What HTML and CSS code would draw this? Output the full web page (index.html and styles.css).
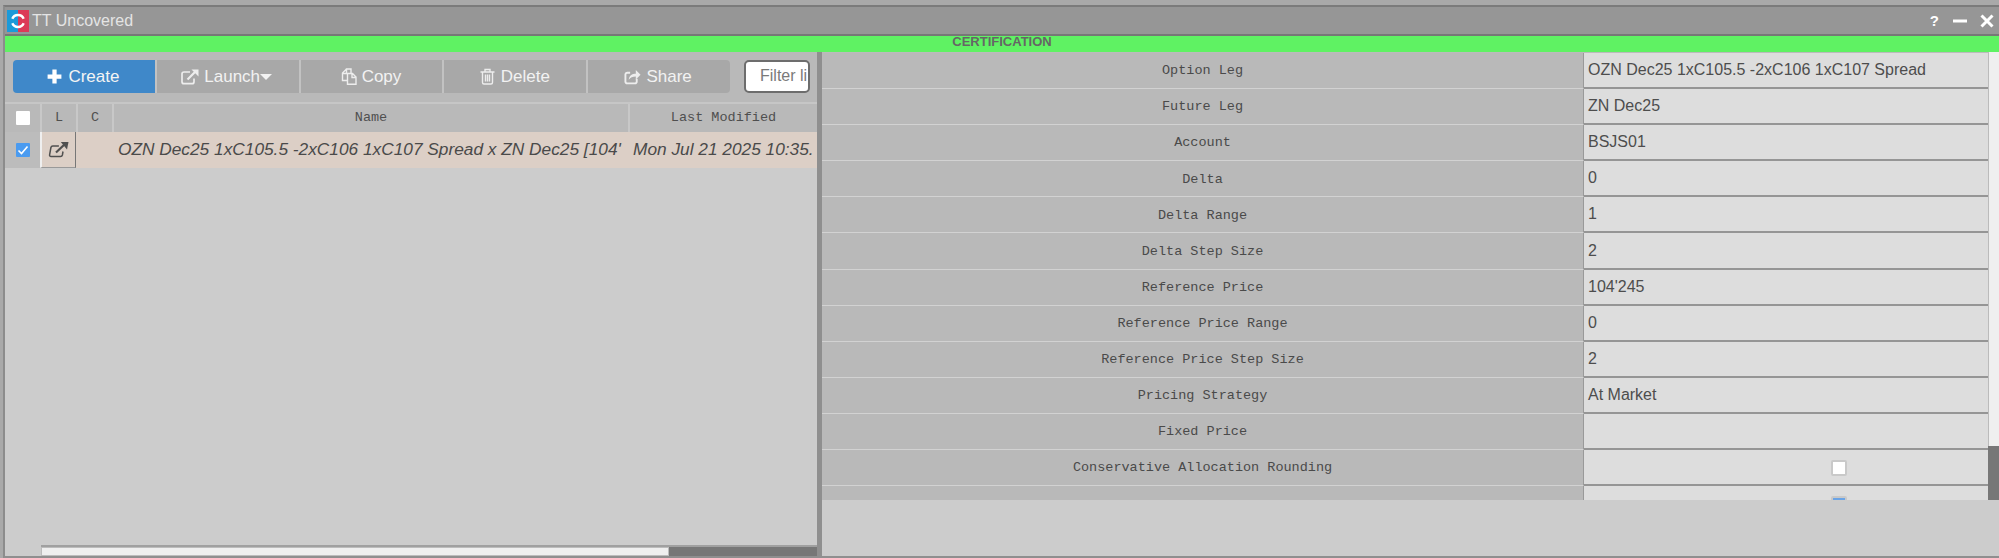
FILE: index.html
```html
<!DOCTYPE html>
<html lang="en">
<head>
<meta charset="utf-8">
<title>TT Uncovered</title>
<link rel="stylesheet" href="styles.css">
</head>
<body>
<div class="window">
  <header class="titlebar">
    <svg class="logo" viewBox="0 0 22 22"><rect width="11" height="22" fill="#1b9ad9"/><rect x="11" width="11" height="22" fill="#dc3a57"/><path d="M5.300 8.800a6.200 6.200 0 0 1 11.400 0M16.700 13.200a6.200 6.200 0 0 1-11.400 0" fill="none" stroke="#fff" stroke-width="2.400"/></svg>
    <span class="title">TT Uncovered</span>
    <span class="win-actions">
      <span class="help">?</span>
      <svg class="win-icon" viewBox="0 0 14 14"><path d="M0 7h14" stroke="#fff" stroke-width="3"/></svg>
      <svg class="win-icon" viewBox="0 0 14 14"><path d="M1.500 1.500l11 11M12.500 1.500l-11 11" stroke="#fff" stroke-width="3"/></svg>
    </span>
  </header>
  <div class="envbar">CERTIFICATION</div>
  <div class="panes">
    <section class="left">
      <div class="toolbar">
        <div class="btn-group">
          <button class="btn primary"><svg class="ico" viewBox="0 0 16 16"><path d="M8 1.500v13M1.500 8h13" stroke="#fff" stroke-width="4"/></svg>Create</button>
          <button class="btn"><svg class="ico ico-wide" viewBox="0 0 18 16"><path d="M13 9.500v3.200a2 2 0 0 1-2 2H3a2 2 0 0 1-2-2V5a2 2 0 0 1 2-2h6" fill="none" stroke="#ededed" stroke-width="1.700"/><path d="M6.500 10.500L15 2" fill="none" stroke="#ededed" stroke-width="2.200"/><path d="M10.500 0.500H17.500V7.500z" fill="#ededed"/></svg>Launch<span class="caret"></span></button>
          <button class="btn"><svg class="ico" viewBox="0 0 17 17"><path d="M6.500 4.500V1h4.500v4M6.500 1L2.500 5v7.500h5M2.500 5.500h4V1.500" fill="none" stroke="#ededed" stroke-width="1.400"/><path d="M7.500 5.500h5l3.500 3.500v7.300H7.500zM12 5.500v4h4" fill="none" stroke="#ededed" stroke-width="1.400"/></svg>Copy</button>
          <button class="btn"><svg class="ico" viewBox="0 0 17 17"><path d="M1.500 4h14M6 4V1.500h5V4M3.500 4v10.500a1.500 1.500 0 0 0 1.500 1.500h7a1.500 1.500 0 0 0 1.500-1.500V4M6.500 6.500v7M8.500 6.500v7M10.500 6.500v7" fill="none" stroke="#ededed" stroke-width="1.400"/></svg>Delete</button>
          <button class="btn"><svg class="ico" viewBox="0 0 18 17"><path d="M13.500 11v2.800a2 2 0 0 1-2 2H3.500a2 2 0 0 1-2-2V6.500a2 2 0 0 1 2-2h3" fill="none" stroke="#ededed" stroke-width="2"/><path d="M5 12c.3-4.500 3.500-6.500 7.500-6.500V1.500l5 5.200-5 5V8.500c-3.500 0-5.500 1-7.500 3.500z" fill="#ededed"/></svg>Share</button>
        </div>
        <div class="filter">Filter li</div>
      </div>
      <div class="grid-head">
        <div class="hcell"><span class="check"></span></div>
        <div class="hcell">L</div>
        <div class="hcell">C</div>
        <div class="hcell">Name</div>
        <div class="hcell">Last Modified</div>
      </div>
      <div class="grid-row">
        <div class="sel-cell"><span class="check on"><svg viewBox="0 0 14 14"><path d="M2.500 7.500l3 3 6-7" fill="none" stroke="#fff" stroke-width="1.600"/></svg></span></div>
        <div class="launch-cell"><svg class="launch" viewBox="0 0 21 17"><path d="M15 10.500l-.6 3.500a2 2 0 0 1-2 1.500H3a1.400 1.400 0 0 1-1.400-1.700l1.300-7.300a2 2 0 0 1 2-1.500h6" fill="none" stroke="#505050" stroke-width="1.500"/><path d="M8 11.500L17 3" fill="none" stroke="#505050" stroke-width="2.200"/><path d="M12.800 1H20.500L19 8.500z" fill="#505050"/></svg></div>
        <div class="c-cell"></div>
        <div class="name-cell">OZN Dec25 1xC105.5 -2xC106 1xC107 Spread x ZN Dec25 [104'</div>
        <div class="date-cell">Mon Jul 21 2025 10:35.</div>
      </div>
      <div class="hscroll"><div class="hthumb"></div></div>
    </section>
    <div class="splitter"></div>
    <section class="right">
      <div class="props-view">
        <div class="props">
          <div class="prop"><div class="plabel">Option Leg</div><div class="pvalue">OZN Dec25 1xC105.5 -2xC106 1xC107 Spread</div></div>
          <div class="prop"><div class="plabel">Future Leg</div><div class="pvalue">ZN Dec25</div></div>
          <div class="prop"><div class="plabel">Account</div><div class="pvalue">BSJS01</div></div>
          <div class="prop"><div class="plabel">Delta</div><div class="pvalue">0</div></div>
          <div class="prop"><div class="plabel">Delta Range</div><div class="pvalue">1</div></div>
          <div class="prop"><div class="plabel">Delta Step Size</div><div class="pvalue">2</div></div>
          <div class="prop"><div class="plabel">Reference Price</div><div class="pvalue">104'245</div></div>
          <div class="prop"><div class="plabel">Reference Price Range</div><div class="pvalue">0</div></div>
          <div class="prop"><div class="plabel">Reference Price Step Size</div><div class="pvalue">2</div></div>
          <div class="prop"><div class="plabel">Pricing Strategy</div><div class="pvalue">At Market</div></div>
          <div class="prop"><div class="plabel">Fixed Price</div><div class="pvalue"></div></div>
          <div class="prop"><div class="plabel">Conservative Allocation Rounding</div><div class="pvalue check-value"><span class="pcheck"></span></div></div>
          <div class="prop"><div class="plabel"></div><div class="pvalue check-value"><span class="pcheck on"></span></div></div>
        </div>
        <div class="vscroll"><div class="vthumb"></div></div>
      </div>
      <div class="right-foot"></div>
    </section>
  </div>
</div>
</body>
</html>
```
FILE: styles.css
```css
* { box-sizing: border-box; }
html, body { margin: 0; height: 558px; overflow: hidden; }
body { background: #a9a9a9; padding: 5px 0 0 3px; font-family: "Liberation Sans", Arial, sans-serif; }
.window { height: 553px; display: flex; flex-direction: column; border-top: 2px solid #7b7b7b; border-left: 2px solid #8c8c8c; border-bottom: 2px solid #8f8f8f; }

.titlebar { height: 29px; flex: none; display: flex; align-items: center; background: #969696; border-bottom: 2px solid #777; padding-left: 2px; }
.logo { width: 22px; height: 22px; flex: none; }
.title { margin-left: 3px; font-size: 16px; color: #e4e4e4; }
.win-actions { margin-left: auto; display: flex; align-items: center; gap: 13px; padding-right: 5px; }
.help { color: #fff; font-weight: 700; font-size: 15px; margin-right: 1px; }
.win-icon { width: 14px; height: 14px; display: block; }

.envbar { height: 16px; flex: none; background: #5ff263; color: #666; font-size: 13px; font-weight: 700; line-height: 11px; text-align: center; }

.panes { flex: 1; min-height: 0; display: flex; }
.left { width: 812px; flex: none; display: flex; flex-direction: column; background: #cccccc; }
.splitter { width: 5px; flex: none; background: #8f8f8f; }
.right { flex: 1; min-width: 0; display: flex; flex-direction: column; background: #cccccc; }

.toolbar { height: 50px; flex: none; display: flex; align-items: flex-start; padding: 8px 8px 0 8px; background: #b9b9b9; }
.btn-group { display: flex; width: 717px; height: 33px; flex: none; }
.btn { flex: 1; display: flex; align-items: center; justify-content: center; gap: 5px; padding: 0 2px 0 0; border: 0; border-right: 2px solid #c2c2c2; background: #a8a8a8; color: #f2f2f2; font: 17px "Liberation Sans", Arial, sans-serif; }
.btn:last-child { border-right: 0; border-radius: 0 4px 4px 0; }
.btn.primary { background: #3f88c9; border-right-color: #c2c2c2; border-radius: 4px 0 0 4px; color: #f4f4f4; }
.ico { width: 17px; height: 17px; flex: none; }
.ico-wide { width: 18px; height: 16px; }
.caret { width: 0; height: 0; margin-left: -5px; border-left: 6px solid transparent; border-right: 6px solid transparent; border-top: 6px solid #f2f2f2; }
.filter { width: 66px; height: 33px; margin-left: 14px; flex: none; background: #fff; border: 2px solid #6d6d6d; border-radius: 5px; padding: 0 2px 0 14px; font-size: 16px; line-height: 28px; color: #7a7a7a; white-space: nowrap; overflow: hidden; }

.grid-head, .grid-row { display: grid; grid-template-columns: 35px 36px 36px 516px 189px; flex: none; }
.grid-head { height: 30px; background: #b9b9b9; border-top: 2px solid #c6c6c6; }
.hcell { display: flex; align-items: center; justify-content: center; background: #b9b9b9; border-left: 2px solid #c8c8c8; font: 13.500px/1 "Liberation Mono", monospace; color: #4f4f4f; }
.hcell:first-child { border-left: 0; }
.check { display: block; width: 14px; height: 14px; background: #fff; border-radius: 1px; }
.check.on { background: #4a9bf0; }
.check svg { display: block; }

.grid-row { height: 36px; background: #dccfc6; font-size: 17.300px; font-style: italic; color: #4a4a4a; }
.sel-cell { background: #bcbcbc; display: flex; align-items: center; justify-content: center; }
.launch-cell { display: flex; align-items: center; justify-content: center; border-left: 2px solid #efefef; border-right: 1px solid #777; border-bottom: 1px solid #999; }
.launch { width: 21px; height: 17px; }
.c-cell { min-width: 0; }
.name-cell, .date-cell { overflow: hidden; white-space: nowrap; line-height: 34px; }
.name-cell { padding-left: 6px; }
.date-cell { padding-left: 5px; }

.hscroll { margin: auto 0 0 36px; height: 11px; width: 776px; flex: none; background: #777; border-top: 2px solid #a0a0a0; }
.hthumb { width: 628px; height: 100%; background: #efefef; border: 1px solid #bcbcbc; }

.props-view { height: 448px; flex: none; display: flex; overflow: hidden; }
.props { flex: 1; min-width: 0; padding-top: 1px; background: #bbb; }
.prop { display: grid; grid-template-columns: 762px 1fr; height: 36.100px; }
.plabel { display: flex; align-items: center; justify-content: center; background: #b9b9b9; border-bottom: 1px solid #d2d2d2; border-right: 1px solid #999; padding-top: 1px; font: 13.500px/1 "Liberation Mono", monospace; color: #4a4a4a; }
.pvalue { display: flex; align-items: center; background: #dddddd; border-bottom: 2px solid #959595; padding-left: 4px; font-size: 16px; color: #4d4d4d; }
.pvalue.check-value { padding: 2px 0 0 247px; }
.pcheck { width: 16px; height: 16px; background: #fff; border: 2px solid #c9c9c9; border-radius: 2px; }
.pcheck.on { background: #6ba4e6; }
.vscroll { width: 11px; flex: none; background: #777; }
.vthumb { height: 394px; background: #efefef; border-left: 1px solid #bbb; }
.right-foot { flex: 1; }
```
